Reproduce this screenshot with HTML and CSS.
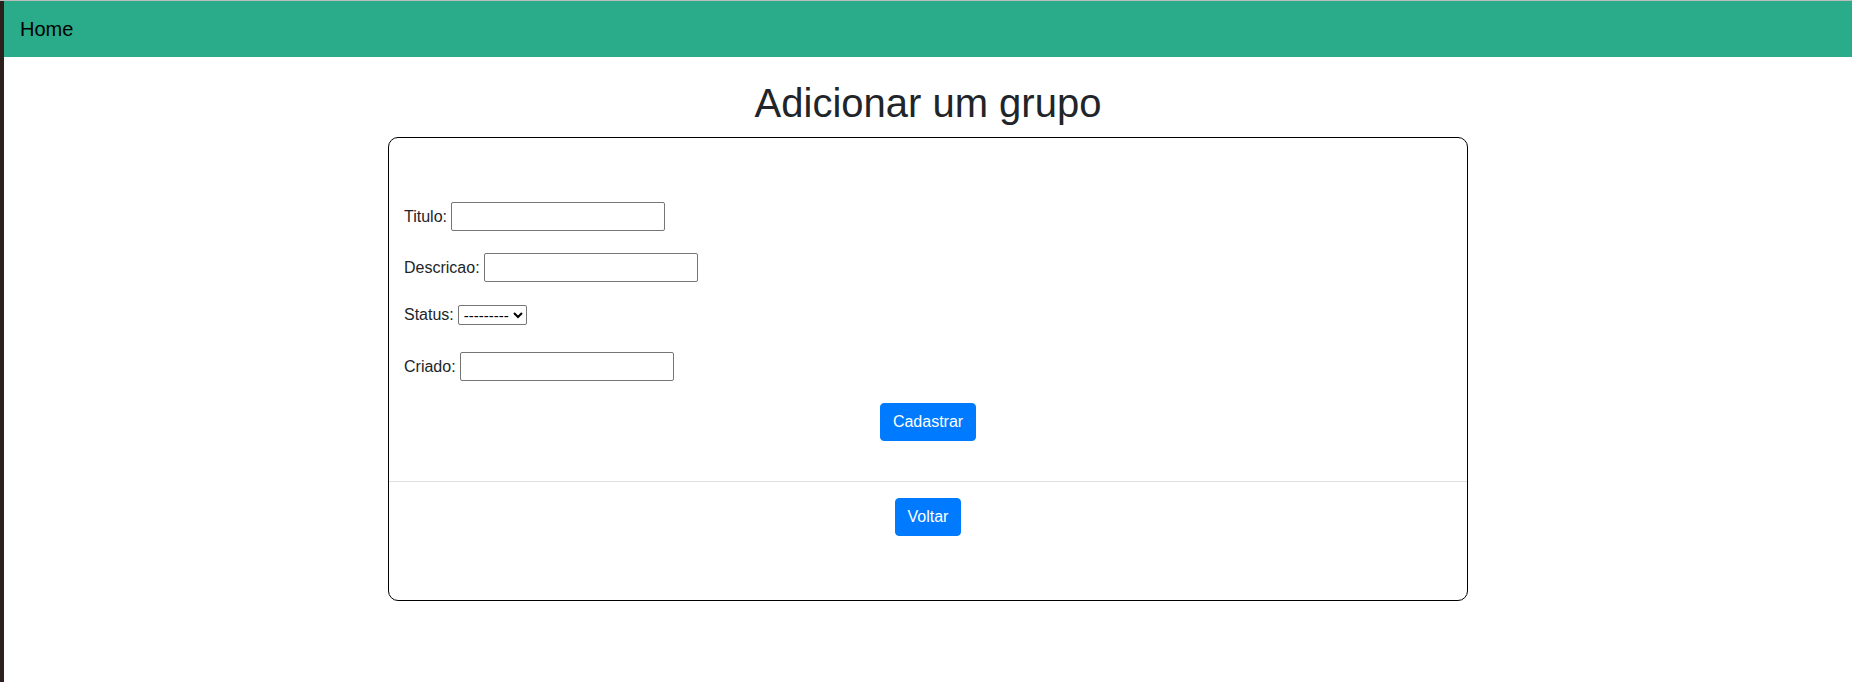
FILE: index.html
```html
<!DOCTYPE html>
<html lang="pt">
<head>
<meta charset="utf-8">
<title>Adicionar um grupo</title>
<link rel="stylesheet" href="styles.css">
</head>
<body>
<nav class="navbar">
  <a class="brand" href="#">Home</a>
</nav>
<main class="page">
  <h1 class="title">Adicionar um grupo</h1>
  <div class="card">
    <form class="card-body">
      <div class="row">
        <label for="titulo">Titulo:</label>
        <input id="titulo" class="field" type="text">
      </div>
      <div class="row row-gap">
        <label for="descricao">Descricao:</label>
        <input id="descricao" class="field" type="text">
      </div>
      <div class="row row-select">
        <label for="status">Status:</label>
        <select id="status" class="select">
          <option>---------</option>
        </select>
      </div>
      <div class="row row-last">
        <label for="criado">Criado:</label>
        <input id="criado" class="field" type="text">
      </div>
      <div class="actions">
        <button type="button" class="btn">Cadastrar</button>
      </div>
    </form>
    <div class="card-footer">
      <button type="button" class="btn">Voltar</button>
    </div>
  </div>
</main>
</body>
</html>
```
FILE: styles.css
```css
html {
  margin: 0;
  padding: 0;
  background: #2b201c;
  border-top: 1px solid #bdbdbd;
  min-height: 100%;
}
body {
  margin: 0 0 0 4px;
  background: #ffffff;
  min-height: 681px;
  font-family: "Liberation Sans", Arial, sans-serif;
  font-size: 16px;
  line-height: 1.5;
  color: #212529;
}
.navbar {
  background: #2aab89;
  height: 56px;
  padding: 0 16px;
  display: flex;
  align-items: center;
}
.brand {
  color: #000;
  font-size: 20px;
  line-height: 30px;
  text-decoration: none;
}
.page {
  display: flex;
  flex-direction: column;
  align-items: center;
}
.title {
  margin: 22px 0 10px;
  font-size: 40px;
  font-weight: 500;
  line-height: 48px;
  color: #212529;
}
.card {
  width: 1080px;
  box-sizing: border-box;
  border: 1px solid #000;
  border-radius: 10px;
}
.card-body {
  margin: 0;
  padding: 64px 15px 40px;
  display: flex;
  flex-direction: column;
}
.row {
  display: flex;
  align-items: center;
  gap: 4px;
  height: 29px;
}
.row label {
  line-height: 24px;
}
.row-gap {
  margin-top: 22px;
}
.row-select {
  margin-top: 21px;
  height: 24px;
}
.row-last {
  margin-top: 25px;
}
.field {
  width: 214px;
  height: 29px;
  box-sizing: border-box;
  border: 1px solid #767676;
  border-radius: 2px;
  padding: 1px 2px;
  font-family: "Liberation Sans", Arial, sans-serif;
  font-size: 16px;
  background: #fff;
}
.select {
  width: 66px;
  height: 18px;
  box-sizing: content-box;
  border: 1px solid #767676;
  border-radius: 2px;
  font-family: "Liberation Sans", Arial, sans-serif;
  font-size: 15px;
  line-height: 18px;
  background: #fff;
  color: #000;
  padding: 0 0 0 1px;
}
.actions {
  margin-top: 22px;
  display: flex;
  justify-content: center;
}
.card-footer {
  border-top: 1px solid #dfdfdf;
  padding: 16px 0 64px;
  display: flex;
  justify-content: center;
}
.btn {
  background: #007bff;
  color: #fff;
  border: 1px solid #007bff;
  border-radius: 4px;
  padding: 6px 12px;
  font-family: "Liberation Sans", Arial, sans-serif;
  font-size: 16px;
  line-height: 24px;
  cursor: pointer;
}
```
